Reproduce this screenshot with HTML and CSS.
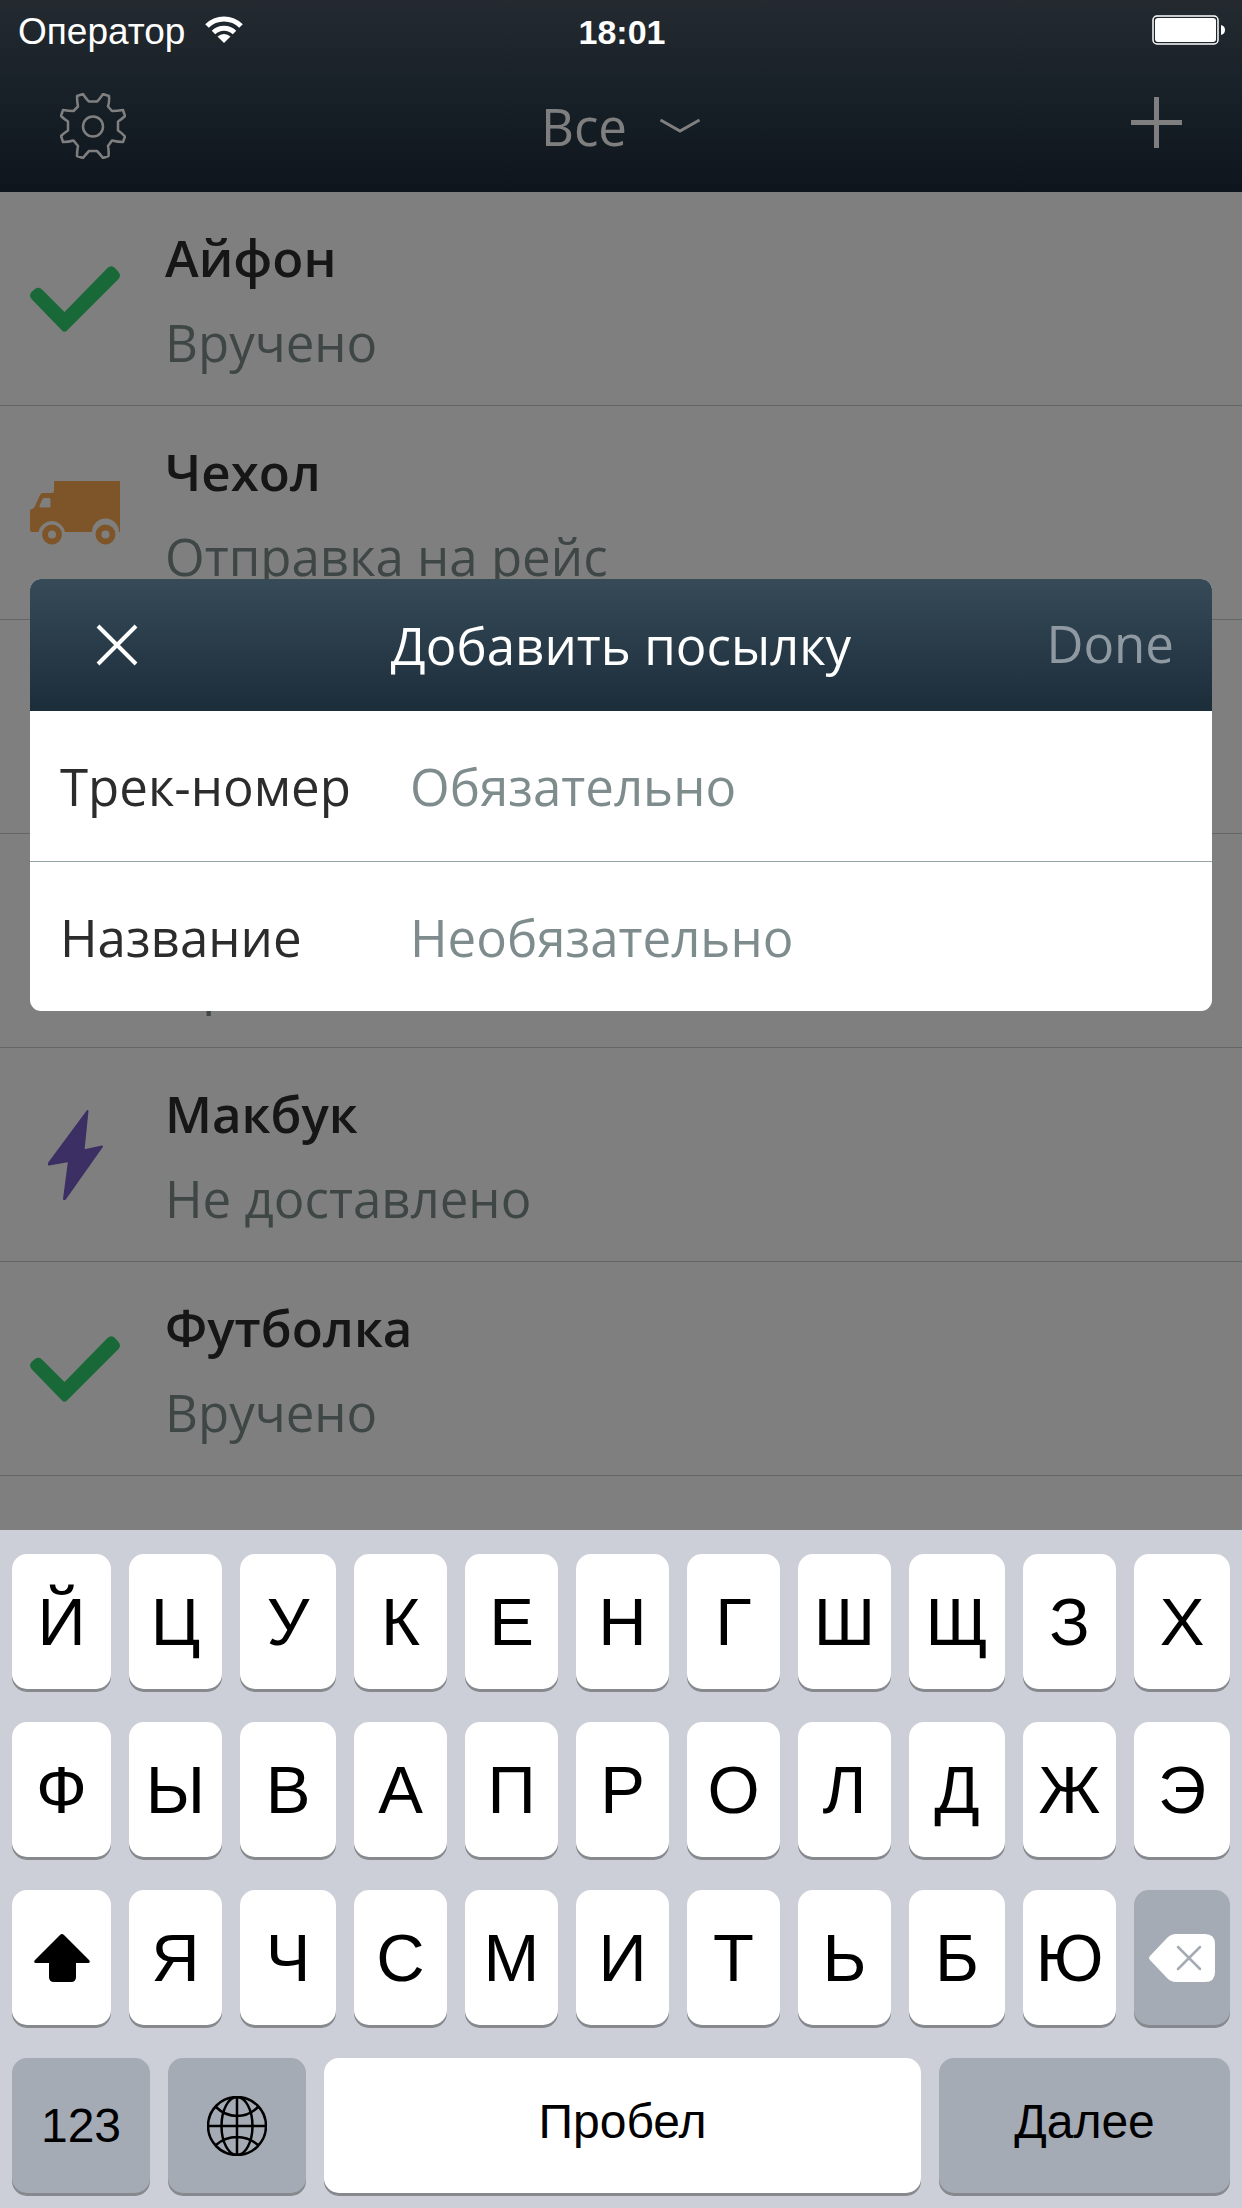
FILE: index.html
```html
<!DOCTYPE html>
<html lang="ru">
<head>
<meta charset="utf-8">
<meta name="viewport" content="width=device-width, initial-scale=1">
<title>Посылки</title>
<link rel="stylesheet" href="styles.css">
</head>
<body>
<svg class="sprite" aria-hidden="true">
  <symbol id="check" viewBox="0 0 90 66">
    <path d="M12.500 24 L34.500 46 L77.500 2 Q81.500 -1.500 85 2 L88.500 6 Q91.500 9.500 88.500 13 L37 64.500 Q34.500 67 32 64.500 L1.500 33 Q-1.500 29.500 1.500 26 L5 23 Q8.800 20 12.500 24 Z" fill="currentColor"/>
  </symbol>
  <symbol id="truck" viewBox="0 0 90 64">
    <path fill="currentColor" fill-rule="evenodd" d="M25 0H89Q90 0 90 1V51H89A13.500 13.500 0 0 0 62 51H35A13.500 13.500 0 0 0 8.500 51H2Q0 51 0 49V30Q0 28 2 28Q4 28 5 25L10 14Q11 12 13 12H22Q24 12 24 10V1Q24 0 25 0ZM14 17Q13 17 12 19L9.500 25Q9 26.500 11 26.500H19Q20.500 26.500 20.500 25V19Q20.500 17 19 17Z"/>
    <circle cx="22" cy="53.500" r="7" fill="none" stroke="currentColor" stroke-width="6"/>
    <circle cx="75.500" cy="53.500" r="7" fill="none" stroke="currentColor" stroke-width="6"/>
  </symbol>
  <symbol id="bolt" viewBox="0 0 90 90">
    <path fill="currentColor" stroke="currentColor" stroke-width="2" stroke-linejoin="round" d="M57.500 1 L53.500 40.500 L72 36.500 L35 89 L34 89 L39 51 L19 54.500 L19 53 Z"/>
  </symbol>
</svg>

<div class="screen">
  <div class="app">
    <header class="topbar">
      <div class="status">
        <div class="carrier">
          <span>Оператор</span>
          <svg class="wifi" viewBox="0 0 38 28" aria-hidden="true">
            <path d="M2 10 A24 24 0 0 1 36 10" fill="none" stroke="#fff" stroke-width="5"/>
            <path d="M8.500 16.500 A15 15 0 0 1 29.500 16.500" fill="none" stroke="#fff" stroke-width="5"/>
            <path d="M19 27 L12.500 20.500 A9.500 9.500 0 0 1 25.500 20.500 Z" fill="#fff"/>
          </svg>
        </div>
        <time class="clock">18:01</time>
        <svg class="battery" viewBox="0 0 74 30" aria-label="Заряд">
          <rect x="1" y="1" width="65" height="28" rx="4" fill="none" stroke="#fff" stroke-width="1.500"/>
          <rect x="3" y="3" width="61" height="24" rx="3" fill="#fff"/>
          <path d="M69 10 Q73 11 73 15 T69 20 Z" fill="#fff"/>
        </svg>
      </div>
      <nav class="nav">
        <button class="icon-button" type="button" aria-label="Настройки">
          <svg class="gear" viewBox="0 0 66 66" aria-hidden="true">
            <path d="M17 3L23 1Q27 7 29 8.500H37Q39 7 43 1L49 3Q49.500 9 48 13.500L52 18Q57 18 63 17L65 23Q62 26 58 28.500V37.500Q62 40 65 43.500L63 49Q58 49 52 47.500L48 53Q49 58 48.500 63L43 65Q39 60 37 58H29Q27 60 23 65L17 63Q17 58 18 53L13.500 47.500Q9 49 3 49L1 43Q4 40 8 37.500V28.500Q4 26 1 23L3 17Q9 18 13.500 18L18 13.500Q17 9 17 3Z"/>
            <circle cx="33" cy="33.500" r="10"/>
          </svg>
        </button>
        <button class="filter" type="button">
          <span>Все</span>
          <svg class="chevron" viewBox="0 0 42 16" aria-hidden="true"><path d="M1.500 2L21 13L40.500 2"/></svg>
        </button>
        <button class="icon-button add" type="button" aria-label="Добавить">
          <svg class="plus" viewBox="0 0 51 51" aria-hidden="true"><path d="M25.500 0V51M0 25.500H51"/></svg>
        </button>
      </nav>
    </header>

    <ul class="parcels">
      <li class="parcel">
        <svg class="mark mark-done" viewBox="0 0 90 66" aria-hidden="true"><use href="#check"/></svg>
        <div class="parcel-text"><h2>Айфон</h2><p>Вручено</p></div>
      </li>
      <li class="parcel">
        <svg class="mark mark-transit" viewBox="0 0 90 64" aria-hidden="true"><use href="#truck"/></svg>
        <div class="parcel-text"><h2>Чехол</h2><p>Отправка на рейс</p></div>
      </li>
      <li class="parcel">
        <svg class="mark mark-done" viewBox="0 0 90 66" aria-hidden="true"><use href="#check"/></svg>
        <div class="parcel-text"><h2>Книга</h2><p>Вручено</p></div>
      </li>
      <li class="parcel">
        <svg class="mark mark-transit" viewBox="0 0 90 64" aria-hidden="true"><use href="#truck"/></svg>
        <div class="parcel-text"><h2>Часы</h2><p>Приём</p></div>
      </li>
      <li class="parcel">
        <svg class="mark mark-failed" viewBox="0 0 90 90" aria-hidden="true"><use href="#bolt"/></svg>
        <div class="parcel-text"><h2>Макбук</h2><p>Не доставлено</p></div>
      </li>
      <li class="parcel">
        <svg class="mark mark-done" viewBox="0 0 90 66" aria-hidden="true"><use href="#check"/></svg>
        <div class="parcel-text"><h2>Футболка</h2><p>Вручено</p></div>
      </li>
    </ul>

    <div class="scrim">
      <form class="dialog" role="dialog" aria-labelledby="dialog-title">
        <div class="dialog-bar">
          <button class="close" type="button" aria-label="Закрыть">
            <svg viewBox="0 0 42 42" aria-hidden="true"><path d="M2 2L40 40M40 2L2 40"/></svg>
          </button>
          <h1 id="dialog-title">Добавить посылку</h1>
          <button class="done" type="button">Done</button>
        </div>
        <div class="field">
          <label for="track">Трек-номер</label>
          <input id="track" type="text" placeholder="Обязательно">
        </div>
        <div class="field">
          <label for="name">Название</label>
          <input id="name" type="text" placeholder="Необязательно">
        </div>
      </form>
    </div>
  </div>

  <div class="keyboard">
    <div class="keys">
      <button type="button">Й</button><button type="button">Ц</button><button type="button">У</button><button type="button">К</button><button type="button">Е</button><button type="button">Н</button><button type="button">Г</button><button type="button">Ш</button><button type="button">Щ</button><button type="button">З</button><button type="button">Х</button>
      <button type="button">Ф</button><button type="button">Ы</button><button type="button">В</button><button type="button">А</button><button type="button">П</button><button type="button">Р</button><button type="button">О</button><button type="button">Л</button><button type="button">Д</button><button type="button">Ж</button><button type="button">Э</button>
      <button type="button" aria-label="Верхний регистр"><svg class="shift" viewBox="0 0 56 48" aria-hidden="true"><path d="M26 1Q28 -1 30 1L55 26Q57 29 54 29H42V43Q42 48 37 48H20Q15 48 15 43V29H2Q-1 29 1 26Z"/></svg></button><button type="button">Я</button><button type="button">Ч</button><button type="button">С</button><button type="button">М</button><button type="button">И</button><button type="button">Т</button><button type="button">Ь</button><button type="button">Б</button><button type="button">Ю</button><button class="dark" type="button" aria-label="Удалить"><svg class="erase" viewBox="0 0 66 48" aria-hidden="true"><path d="M1 22L18 4Q22 0 27 0H56Q66 0 66 10V38Q66 48 56 48H27Q22 48 18 44L1 26Q-1 24 1 22Z" fill="#fff"/><path d="M29 13L51 35M51 13L29 35" fill="none" stroke="#a4abb5" stroke-width="2.500" stroke-linecap="round"/></svg></button>
    </div>
    <div class="keys keys-bottom">
      <button class="dark" type="button">123</button>
      <button class="dark" type="button" aria-label="Сменить язык"><svg class="globe" viewBox="0 0 60 60" aria-hidden="true"><circle cx="30" cy="30" r="29"/><ellipse cx="30" cy="30" rx="15.500" ry="29"/><path d="M30 1V59M1 30H59M9 11Q18 20 30 20T51 11M9 49Q18 41 30 41T51 49"/></svg></button>
      <button class="word" type="button">Пробел</button>
      <button class="word dark" type="button">Далее</button>
    </div>
  </div>
</div>
</body>
</html>
```
FILE: styles.css
```css
* {
  box-sizing: border-box;
}

body {
  margin: 0;
  background: #fff;
  color: #2c2c2c;
  font-family: "Open Sans", "Noto Sans", sans-serif;
  font-size: 51px;
  line-height: 70px;
}

h1,
h2,
p,
ul {
  margin: 0;
  padding: 0;
  font-size: inherit;
}

button,
input {
  padding: 0;
  border: 0;
  background: none;
  color: inherit;
  font: inherit;
}

svg {
  display: block;
  flex: none;
}

.sprite {
  position: absolute;
  width: 0;
  height: 0;
}

.screen {
  display: flex;
  flex-direction: column;
  min-height: 100vh;
}

.app {
  position: relative;
  flex: 1;
}

/* Top bar */

.topbar {
  background: linear-gradient(#485460, #304250 50%, #1e2a38);
  color: #fff;
}

.status {
  position: relative;
  z-index: 2;
  display: grid;
  grid-template-columns: 1fr auto 1fr;
  align-items: center;
  height: 60px;
  padding: 0 16px 0 18px;
  font-family: "Liberation Sans", Arial, sans-serif;
  font-size: 37px;
  line-height: 40px;
}

.carrier {
  display: flex;
  align-items: center;
  gap: 20px;
}

.carrier span,
.clock {
  padding-top: 4px;
}

.wifi {
  width: 38px;
  height: 28px;
}

.clock {
  font-size: 34px;
  font-weight: 700;
}

.battery {
  justify-self: end;
  width: 74px;
  height: 30px;
}

.nav {
  display: grid;
  grid-template-columns: 1fr auto 1fr;
  align-items: center;
  height: 132px;
  padding: 0 60px;
}

.nav svg {
  fill: none;
  stroke: currentColor;
}

.add {
  justify-self: end;
  padding-bottom: 8px;
}

.gear {
  width: 66px;
  height: 66px;
  stroke-width: 2.5;
  stroke-linejoin: round;
}

.filter {
  display: flex;
  align-items: center;
  gap: 32px;
}

.chevron {
  width: 42px;
  height: 16px;
  stroke-width: 3;
}

.plus {
  width: 51px;
  height: 51px;
  stroke-width: 5;
}

/* Parcel list */

.parcels {
  list-style: none;
}

.parcel {
  display: flex;
  align-items: center;
  gap: 45px;
  height: 214px;
  padding: 0 30px;
  border-bottom: 1px solid #c8cccc;
}

.mark {
  width: 90px;
}

.mark-done {
  color: #32d070;
}

.mark-transit {
  color: #fbab52;
}

.mark-failed {
  color: #765fc6;
}

.parcel-text {
  display: grid;
  gap: 15px;
  padding-top: 2px;
}

.parcel h2 {
  font-weight: 600;
}

.parcel p {
  color: #7f8c8d;
}

/* Dialog */

.scrim {
  position: absolute;
  inset: 0;
  display: grid;
  align-items: center;
  padding: 60px 30px 0;
  background: rgba(0, 0, 0, 0.5);
}

.dialog {
  overflow: hidden;
  border-radius: 11px;
  background: #fff;
}

.dialog-bar {
  display: grid;
  grid-template-columns: 1fr auto 1fr;
  align-items: center;
  height: 132px;
  padding: 0 38px;
  background: linear-gradient(#364a58, #1c2d3a);
  color: #fff;
}

.dialog h1 {
  font-weight: 400;
}

.close {
  justify-self: start;
  padding: 0 28px;
}

.close svg {
  width: 42px;
  height: 42px;
  fill: none;
  stroke: currentColor;
  stroke-width: 4;
}

.done {
  justify-self: end;
  padding-bottom: 4px;
  color: #8f99a1;
}

.field {
  display: grid;
  grid-template-columns: 350px 1fr;
  align-items: center;
  height: 150px;
  padding: 0 30px;
}

.field + .field {
  border-top: 1px solid #95a5a6;
}

.field input {
  width: 100%;
  outline: none;
}

.field input::placeholder {
  color: #7f8c8d;
  opacity: 1;
}

/* Keyboard */

.keyboard {
  display: grid;
  gap: 33px;
  padding: 24px 12px 15px;
  background: #cccfd7;
}

.keys {
  display: grid;
  grid-template-columns: 99fr 93fr 96fr 93fr 93fr 93fr 93fr 93fr 96fr 93fr 96fr;
  gap: 33px 18px;
}

.keys-bottom {
  grid-template-columns: 138fr 138fr 597fr 291fr;
}

.keys button {
  display: grid;
  place-items: center;
  height: 135px;
  min-width: 0;
  border-radius: 15px;
  background: #fff;
  box-shadow: 0 3px 0 #86898d;
  color: #000;
  font-family: "Liberation Sans", Arial, sans-serif;
  font-size: 67px;
  line-height: 78px;
}

.keys-bottom button {
  font-size: 48px;
  line-height: 56px;
}

.keys .word {
  padding-bottom: 8px;
}

.keys .dark {
  background: #a4abb5;
}

.shift {
  width: 56px;
  height: 48px;
}

.erase {
  width: 66px;
  height: 48px;
}

.globe {
  width: 60px;
  height: 60px;
  fill: none;
  stroke: #000;
  stroke-width: 2.5;
}
```
